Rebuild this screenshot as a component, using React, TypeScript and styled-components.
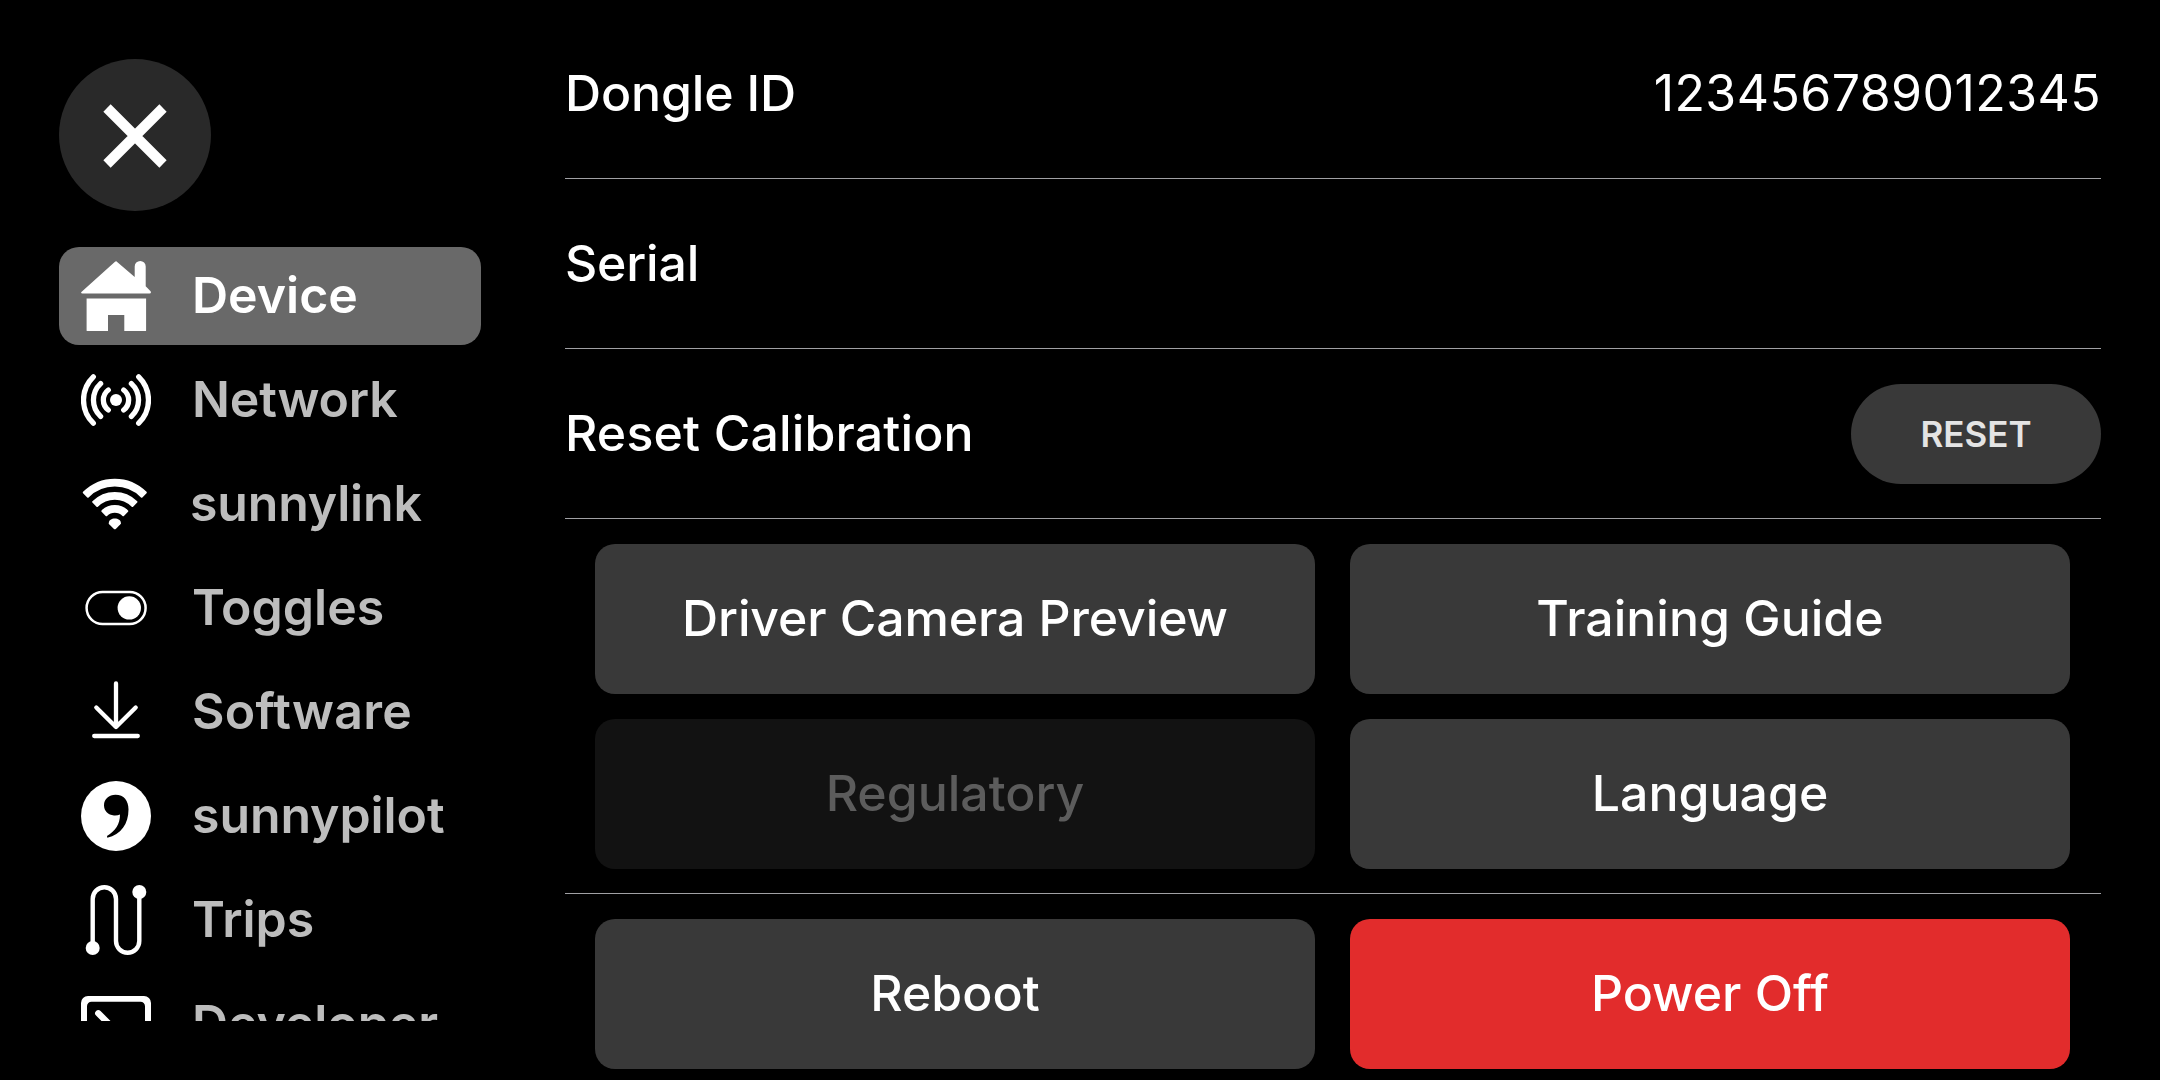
import React from "react";
import styled, { createGlobalStyle } from "styled-components";

const GlobalStyle = createGlobalStyle`
  html, body { margin: 0; background: #000; }
  * { box-sizing: border-box; }
  button { border: 0; margin: 0; padding: 0; font: inherit; color: inherit; background: none; cursor: pointer; }
`;

const Screen = styled.div`
  display: flex;
  width: 2160px;
  height: 1080px;
  overflow: hidden;
  background: #000;
  color: #fff;
  font-family: Inter, "Liberation Sans", sans-serif;
  font-size: 50px;
  line-height: 60px;
  font-variant-ligatures: none;
`;

const Sidebar = styled.aside`
  display: flex;
  flex-direction: column;
  gap: 36px;
  width: 481px;
  padding: 59px 0 59px 59px;
`;

const CloseButton = styled.button`
  display: flex;
  align-items: center;
  justify-content: center;
  flex: none;
  width: 152px;
  height: 152px;
  padding-top: 2px;
  border-radius: 50%;
  background: #292929;
`;

const Nav = styled.nav`
  display: flex;
  flex-direction: column;
  flex: 1;
  gap: 6px;
  min-height: 0;
  overflow: hidden;
`;

const NavItem = styled.button<{ $active?: boolean }>`
  display: flex;
  align-items: center;
  flex: none;
  height: 98px;
  padding-left: 22px;
  border-radius: 20px;
  background: ${(p) => (p.$active ? "#696969" : "transparent")};
  color: ${(p) => (p.$active ? "#fff" : "#bdbdbd")};
  font-weight: 600;
  text-align: left;
`;

const NavIcon = styled.svg<{ $width?: number }>`
  display: block;
  flex: none;
  width: ${(p) => p.$width ?? 70}px;
  height: 70px;
  margin-right: 41px;
  color: #fff;
`;

const Label = styled.span<{ $tracking?: number }>`
  display: block;
  padding-bottom: 2px;
  letter-spacing: ${(p) => p.$tracking ?? 0}px;
`;

const Content = styled.main`
  flex: 1;
  padding: 9px 59px 0 84px;
`;

const Row = styled.div`
  display: flex;
  align-items: center;
  justify-content: space-between;
  height: 170px;
  border-bottom: 1px solid #a0a0a4;
  font-weight: 500;
`;

const Value = styled(Label)`
  font-weight: 400;
`;

const PillButton = styled.button`
  width: 250px;
  height: 100px;
  border-radius: 50px;
  background: #393939;
  color: #e4e4e4;
  font-size: 35px;
  font-weight: 600;
  line-height: 42px;
`;

const ButtonGrid = styled.div<{ $divided?: boolean }>`
  display: grid;
  grid-template-columns: 720px 720px;
  gap: 25px 35px;
  padding: 25px 30px ${(p) => (p.$divided ? 24 : 0)}px;
  border-bottom: ${(p) => (p.$divided ? "1px solid #a0a0a4" : "none")};
`;

const tones = {
  normal: { bg: "#393939", fg: "#fff" },
  disabled: { bg: "#121212", fg: "#5c5c5c" },
  danger: { bg: "#e22c2c", fg: "#fff" },
};

const ActionButton = styled.button<{ $tone?: keyof typeof tones }>`
  height: 150px;
  border-radius: 20px;
  background: ${(p) => tones[p.$tone ?? "normal"].bg};
  color: ${(p) => tones[p.$tone ?? "normal"].fg};
  font-weight: 500;
`;

const HomeIcon = () => (
  <NavIcon viewBox="0 0 70 70" fill="currentColor">
    <path d="M35 0L53.7 16V5.5a5.5 5.5 0 0 1 11 0V25.3L69.6 30.2Q70.6 32.5 68.5 32.5H1.5Q-.6 32.5 .4 30.9L34 .7Q35-.3 36 .7Z" />
    <path d="M5.6 37.5H65.1V69.4Q65.1 70 64.4 70H43.3V54H27V70H6.3Q5.6 70 5.6 69.4Z" />
  </NavIcon>
);

const NetworkIcon = () => (
  <NavIcon viewBox="0 0 70 70" fill="none" stroke="currentColor" strokeWidth="5.3" strokeLinecap="round">
    <circle cx="35" cy="35" r="6" fill="currentColor" stroke="none" />
    <path d="M12.3 11.8A32.4 32.4 0 0 0 12.3 58.2M19.6 18.6A22.4 22.4 0 0 0 19.6 51.4M27.3 25A12.6 12.6 0 0 0 27.3 45" />
    <path d="M57.7 11.8A32.4 32.4 0 0 1 57.7 58.2M50.4 18.6A22.4 22.4 0 0 1 50.4 51.4M42.7 25A12.6 12.6 0 0 1 42.7 45" />
  </NavIcon>
);

// One band of the wifi fan: a ring sector 45 degrees either side of vertical.
const wifiBand = (outer: number, inner: number) => {
  const cx = 33.8;
  const cy = 54.6;
  const o = outer * Math.SQRT1_2;
  const i = inner * Math.SQRT1_2;
  return `M${cx - o} ${cy - o}A${outer} ${outer} 0 0 1 ${cx + o} ${cy - o}L${cx + i} ${cy - i}A${inner} ${inner} 0 0 0 ${cx - i} ${cy - i}Z`;
};

const WifiIcon = () => (
  <NavIcon $width={68} viewBox="0 0 68 70" fill="currentColor" stroke="currentColor" strokeWidth="2" strokeLinejoin="round">
    <path d={wifiBand(43.9, 38)} />
    <path d={wifiBand(30.7, 24.9)} />
    <path d={wifiBand(17.7, 11.9)} />
    <path stroke="none" d="M27.8 54.2C27.8 51.2 30.6 49.6 33.8 49.6C37 49.6 39.9 51.2 39.9 54.2L39.2 55.6L35 59.8Q33.8 60.8 32.7 59.8L28.4 55.6Z" />
  </NavIcon>
);

const ToggleIcon = () => (
  <NavIcon viewBox="0 0 70 70" fill="none">
    <rect x="5.6" y="19" width="59" height="32" rx="16" stroke="currentColor" strokeWidth="2.5" />
    <circle cx="48.3" cy="34.9" r="11.7" fill="currentColor" />
  </NavIcon>
);

const DownloadIcon = () => (
  <NavIcon viewBox="0 0 70 70" fill="none" stroke="currentColor" strokeWidth="4.3" strokeLinecap="round" strokeLinejoin="round">
    <path d="M35 6.5V50M15.3 30.5L35 50L54.7 30.5M13.2 59H56.8" />
  </NavIcon>
);

const CommaIcon = () => (
  <NavIcon viewBox="0 0 70 70">
    <circle cx="35" cy="35" r="35" fill="currentColor" />
    <path fill="#000" d="M39 33.5Q36.5 34.6 33 34.4C27 34.1 23 30 23 24.3C23 18 28 13.7 34.5 13.7C43 13.7 47.5 19.5 47.5 28.5C47.5 43 40 53.5 26.3 56.8L26 55C34.5 50 39 43 39 33.5Z" />
  </NavIcon>
);

const TripsIcon = () => (
  <NavIcon viewBox="0 0 70 70" fill="none" stroke="currentColor" strokeWidth="4.4">
    <path d="M11.7 63V13.9A11.65 11.65 0 0 1 35 13.9V56.1A11.65 11.65 0 0 0 58.3 56.1V7" />
    <circle cx="11.7" cy="63" r="7" fill="currentColor" stroke="none" />
    <circle cx="58.3" cy="7" r="7" fill="currentColor" stroke="none" />
  </NavIcon>
);

const TerminalIcon = () => (
  <NavIcon viewBox="0 0 70 70" fill="none" stroke="currentColor" strokeLinecap="round" strokeLinejoin="round">
    <path fill="currentColor" fillRule="evenodd" stroke="none" d="M7 7H63A7 7 0 0 1 70 14V56A7 7 0 0 1 63 63H7A7 7 0 0 1 0 56V14A7 7 0 0 1 7 7ZM10.5 12.8A4.5 4.5 0 0 0 6 17.3V52.7A4.5 4.5 0 0 0 10.5 57.2H59.5A4.5 4.5 0 0 0 64 52.7V17.3A4.5 4.5 0 0 0 59.5 12.8Z" />
    <path strokeWidth="6.4" d="M17.3 24.3L28 35L17.3 45.7M36 46H52" />
  </NavIcon>
);

const panels = [
  { name: "Device", Icon: HomeIcon },
  { name: "Network", Icon: NetworkIcon, tracking: -0.2 },
  { name: "sunnylink", Icon: WifiIcon, tracking: -0.17 },
  { name: "Toggles", Icon: ToggleIcon },
  { name: "Software", Icon: DownloadIcon, tracking: 0.25 },
  { name: "sunnypilot", Icon: CommaIcon, tracking: -0.08 },
  { name: "Trips", Icon: TripsIcon },
  { name: "Developer", Icon: TerminalIcon, tracking: -0.1 },
];

export default function App() {
  return (
    <>
      <GlobalStyle />
      <Screen>
        <Sidebar>
          <CloseButton aria-label="Close">
            <svg width="64" height="64" viewBox="0 0 64 64" stroke="#fff" strokeWidth="10.3">
              <path d="M4 4L60 60M60 4L4 60" />
            </svg>
          </CloseButton>
          <Nav>
            {panels.map(({ name, Icon, tracking }) => (
              <NavItem key={name} $active={name === "Device"}>
                <Icon />
                <Label $tracking={tracking}>{name}</Label>
              </NavItem>
            ))}
          </Nav>
        </Sidebar>
        <Content>
          <Row>
            <Label $tracking={-0.15}>Dongle ID</Label>
            <Value $tracking={0.43}>123456789012345</Value>
          </Row>
          <Row>
            <Label $tracking={-0.2}>Serial</Label>
          </Row>
          <Row>
            <Label $tracking={0.15}>Reset Calibration</Label>
            <PillButton>RESET</PillButton>
          </Row>
          <ButtonGrid $divided>
            <ActionButton>
              <Label $tracking={-0.12}>Driver Camera Preview</Label>
            </ActionButton>
            <ActionButton>
              <Label>Training Guide</Label>
            </ActionButton>
            <ActionButton $tone="disabled">
              <Label>Regulatory</Label>
            </ActionButton>
            <ActionButton>
              <Label>Language</Label>
            </ActionButton>
          </ButtonGrid>
          <ButtonGrid>
            <ActionButton>
              <Label>Reboot</Label>
            </ActionButton>
            <ActionButton $tone="danger">
              <Label>Power Off</Label>
            </ActionButton>
          </ButtonGrid>
        </Content>
      </Screen>
    </>
  );
}
